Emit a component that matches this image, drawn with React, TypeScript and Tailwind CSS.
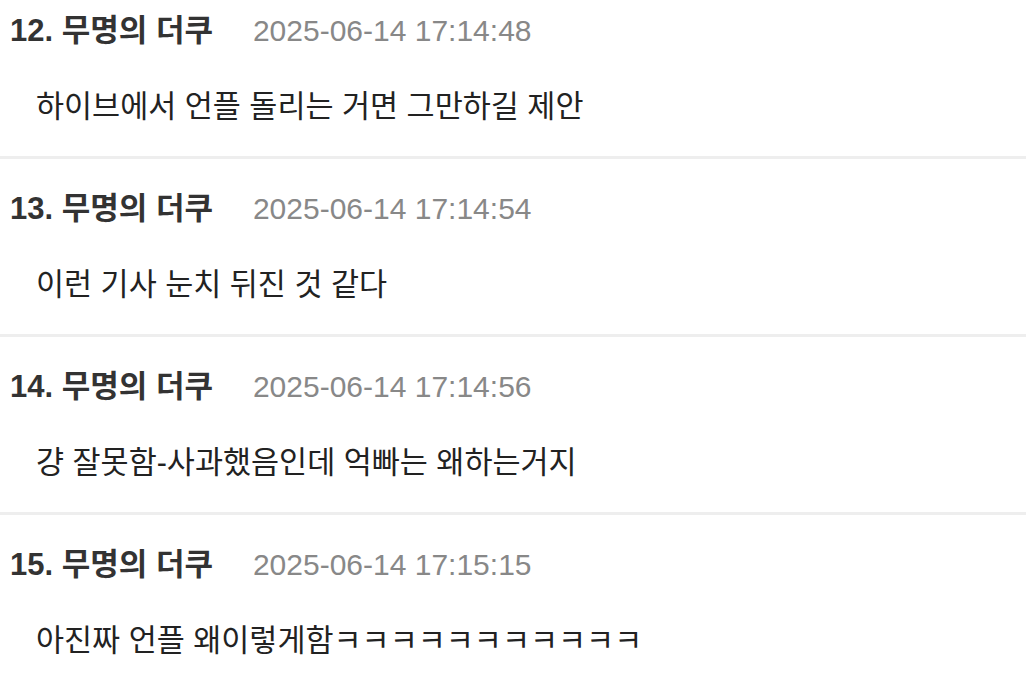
import React from "react";

const rows = [
  { n: "12.", date: "2025-06-14 17:14:48", body: "하이브에서 언플 돌리는 거면 그만하길 제안" },
  { n: "13.", date: "2025-06-14 17:14:54", body: "이런 기사 눈치 뒤진 것 같다" },
  { n: "14.", date: "2025-06-14 17:14:56", body: "걍 잘못함-사과했음인데 억빠는 왜하는거지" },
  { n: "15.", date: "2025-06-14 17:15:15", body: "아진짜 언플 왜이렇게함ㅋㅋㅋㅋㅋㅋㅋㅋㅋㅋㅋ" },
];

export default function App() {
  return (
    <div
      className="w-[1026px] h-[678px] overflow-hidden bg-white"
      style={{ fontFamily: '"Liberation Sans", "Noto Sans CJK KR", sans-serif' }}
    >
      {rows.map((r, i) => (
        <div
          key={i}
          className={`border-b-[3px] border-[#eeeeee] pb-[32px] ${i === 0 ? "pt-[13px]" : "pt-[32px]"}`}
        >
          <div className="flex items-center h-[36px] pl-[10px]">
            <span className="text-[31px] font-bold text-[#333333] leading-[36px] whitespace-nowrap">
              {r.n} 무명의 더쿠
            </span>
            <span className="ml-[40px] text-[30px] text-[#888888] leading-[36px] whitespace-nowrap">
              {r.date}
            </span>
          </div>
          <div className="mt-[39px] h-[36px] pl-[36px] text-[30.5px] text-[#222222] leading-[36px] whitespace-nowrap">
            {r.body}
          </div>
        </div>
      ))}
    </div>
  );
}
